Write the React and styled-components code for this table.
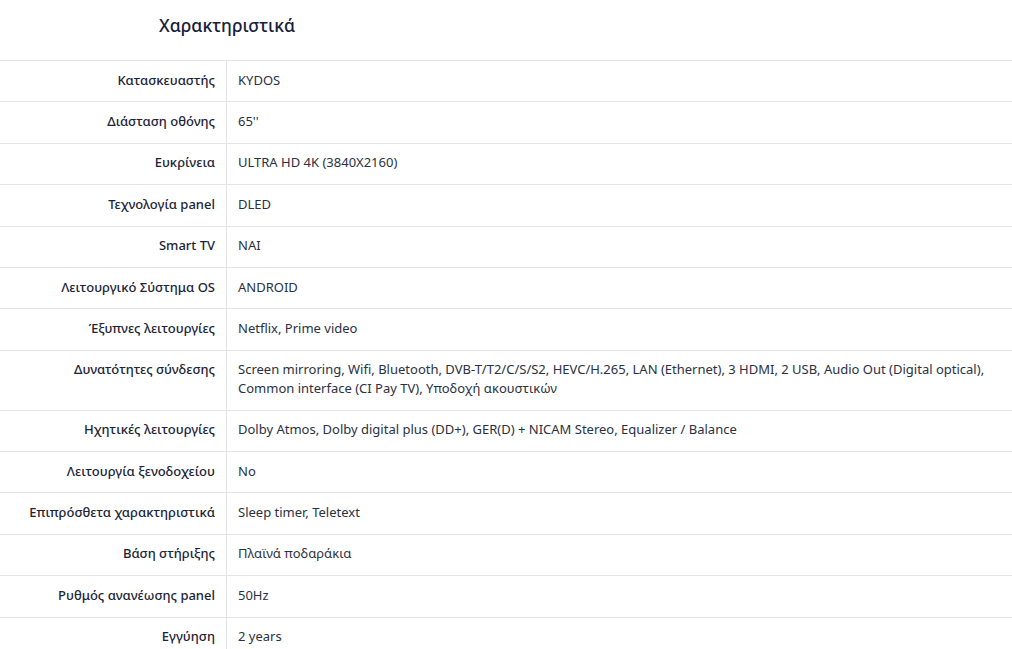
import React from "react";
import styled, { createGlobalStyle } from "styled-components";

const Global = createGlobalStyle`
  body {
    margin: 0;
    background: #ffffff;
    font-family: "Noto Sans", "Open Sans", Arial, sans-serif;
    color: #1c2436;
  }
`;

const Wrapper = styled.section`
  width: 1012px;
`;

const Title = styled.h2`
  margin: 0;
  padding: 14px 0 0 159px;
  height: 60px;
  box-sizing: border-box;
  font-size: 17.5px;
  font-weight: 500;
  line-height: 22px;
  color: #17203a;
`;

const Table = styled.div`
  border-top: 1px solid #e2e4ea;
`;

const Row = styled.div`
  display: grid;
  grid-template-columns: 227px 1fr;
  border-bottom: 1px solid #e2e4ea;
`;

const Label = styled.div`
  padding: 9.5px 11px 12.5px 0;
  text-align: right;
  font-size: 13px;
  line-height: 18.4px;
  font-weight: 500;
  color: #1c2436;
  border-right: 1px solid #e2e4ea;
`;

const Value = styled.div`
  padding: 9.5px 14px 12.5px 11px;
  font-size: 13px;
  line-height: 18.4px;
  color: #2a3142;
`;

const specs = [
  ["Κατασκευαστής", "KYDOS"],
  ["Διάσταση οθόνης", "65''"],
  ["Ευκρίνεια", "ULTRA HD 4K (3840X2160)"],
  ["Τεχνολογία panel", "DLED"],
  ["Smart TV", "NAI"],
  ["Λειτουργικό Σύστημα OS", "ANDROID"],
  ["Έξυπνες λειτουργίες", "Netflix, Prime video"],
  [
    "Δυνατότητες σύνδεσης",
    "Screen mirroring, Wifi, Bluetooth, DVB-T/T2/C/S/S2, HEVC/H.265, LAN (Ethernet), 3 HDMI, 2 USB, Audio Out (Digital optical), Common interface (CI Pay TV), Υποδοχή ακουστικών",
  ],
  [
    "Ηχητικές λειτουργίες",
    "Dolby Atmos, Dolby digital plus (DD+), GER(D) + NICAM Stereo, Equalizer / Balance",
  ],
  ["Λειτουργία ξενοδοχείου", "No"],
  ["Επιπρόσθετα χαρακτηριστικά", "Sleep timer, Teletext"],
  ["Βάση στήριξης", "Πλαϊνά ποδαράκια"],
  ["Ρυθμός ανανέωσης panel", "50Hz"],
  ["Εγγύηση", "2 years"],
];

export default function App() {
  return (
    <Wrapper>
      <Global />
      <Title>Χαρακτηριστικά</Title>
      <Table>
        {specs.map(([k, v]) => (
          <Row key={k}>
            <Label>{k}</Label>
            <Value>{v}</Value>
          </Row>
        ))}
      </Table>
    </Wrapper>
  );
}
